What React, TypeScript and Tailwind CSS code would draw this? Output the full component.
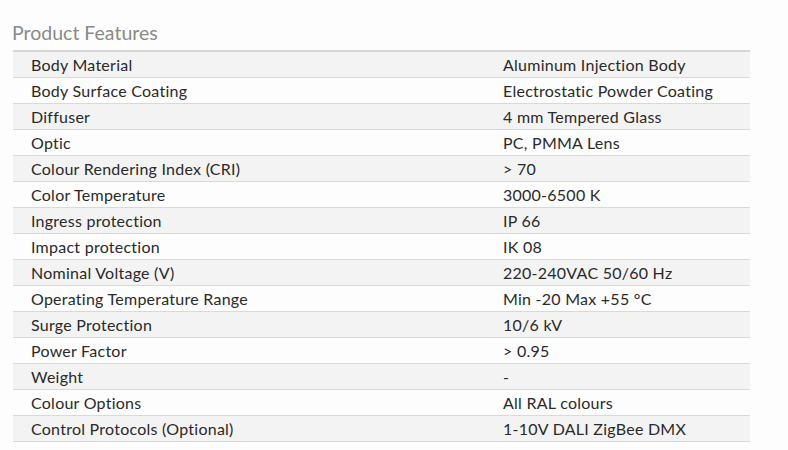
const rows: [string, string][] = [
  ["Body Material", "Aluminum Injection Body"],
  ["Body Surface Coating", "Electrostatic Powder Coating"],
  ["Diffuser", "4 mm Tempered Glass"],
  ["Optic", "PC, PMMA Lens"],
  ["Colour Rendering Index (CRI)", "> 70"],
  ["Color Temperature", "3000-6500 K"],
  ["Ingress protection", "IP 66"],
  ["Impact protection", "IK 08"],
  ["Nominal Voltage (V)", "220-240VAC 50/60 Hz"],
  ["Operating Temperature Range", "Min -20 Max +55 °C"],
  ["Surge Protection", "10/6 kV"],
  ["Power Factor", "> 0.95"],
  ["Weight", "-"],
  ["Colour Options", "All RAL colours"],
  ["Control Protocols (Optional)", "1-10V DALI ZigBee DMX"],
];

export default function App() {
  return (
    <div
      className="w-[788px] h-[450px] bg-[#fdfdfd] pl-[13px] pt-[20px] overflow-hidden"
      style={{ fontFamily: '"Lato", "Liberation Sans", sans-serif' }}
    >
      <h2 className="text-[19.5px] leading-[25px] text-[#8a8a8a] -ml-[1px] mb-[5px]">Product Features</h2>
      <table className="w-[737px] border-collapse border-t-2 border-[#d6d6d6] text-[16px] tracking-[0.25px] text-[#2a2a2a]">
        <tbody>
          {rows.map(([label, value], i) => (
            <tr key={label} className={`h-[26px] border-b border-[#d9d9d9] ${i % 2 === 0 ? "bg-[#f3f3f3]" : "bg-[#fdfdfd]"}`}>
              <td className="w-[472px] pl-[18px] pt-[2px] leading-[20px] align-middle">{label}</td>
              <td className="pl-[18px] pt-[2px] leading-[20px] align-middle">{value}</td>
            </tr>
          ))}
        </tbody>
      </table>
    </div>
  );
}
